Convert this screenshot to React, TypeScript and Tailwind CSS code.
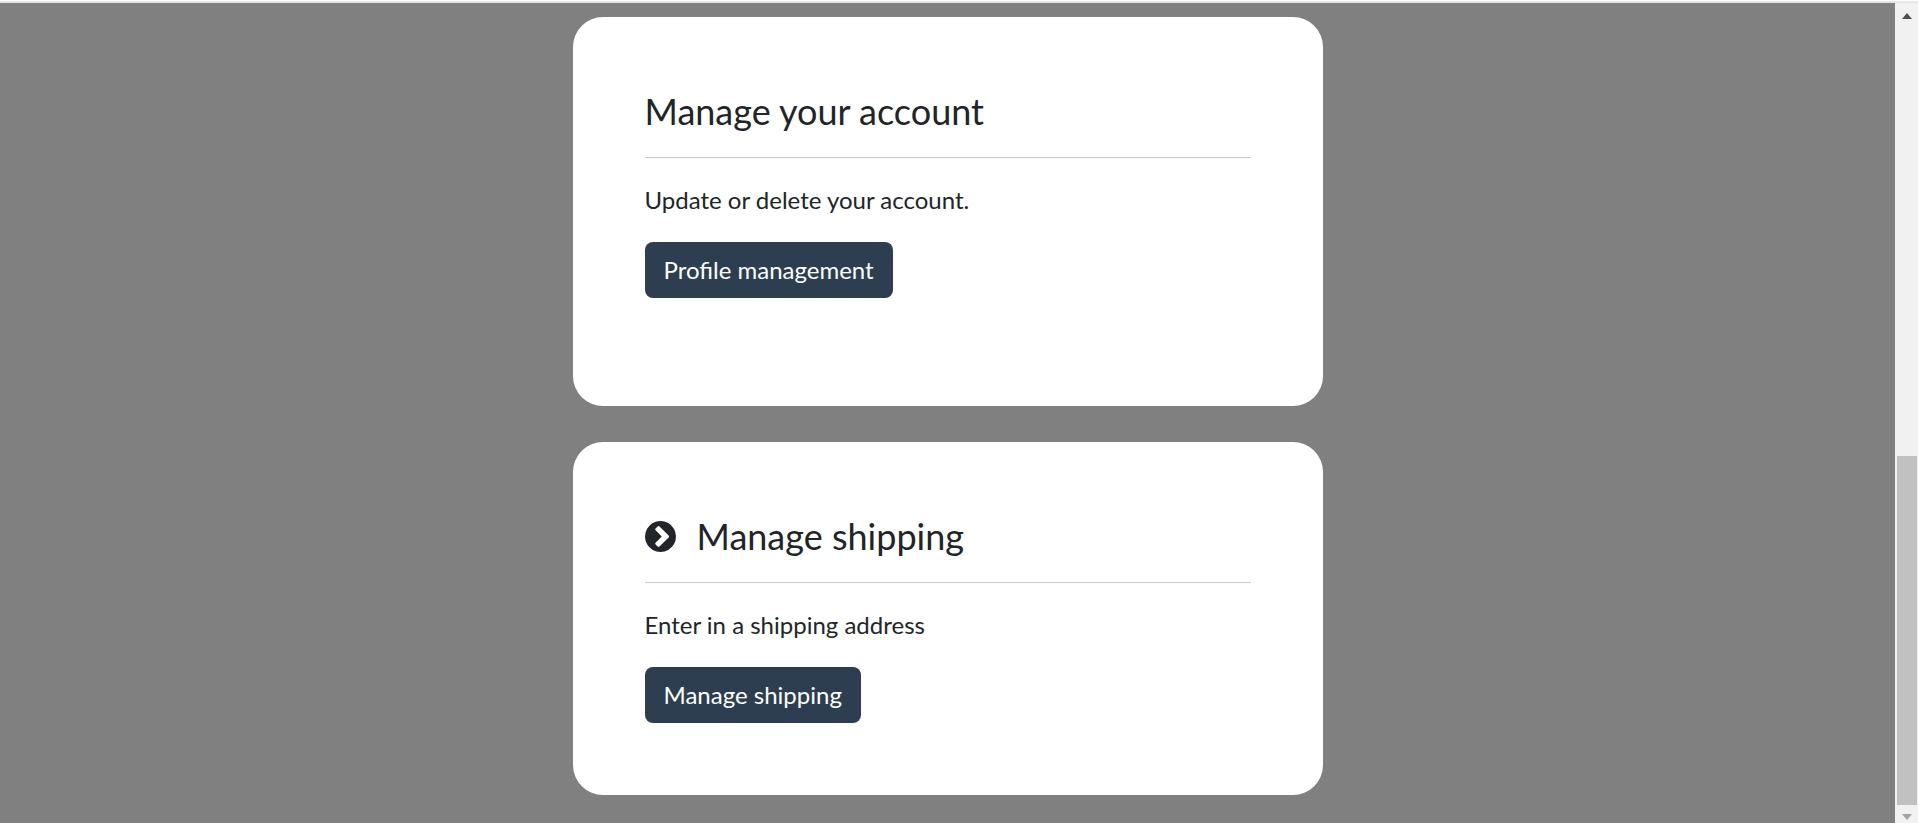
import type { ReactNode } from 'react';

function ChevronCircle() {
  return (
    <svg aria-hidden="true" viewBox="128 128 1536 1536" fill="currentColor" className="mr-[21px] size-[31px] shrink-0">
      <path d="M845 1395l454-454q19-19 19-45t-19-45l-454-454q-19-19-45-19t-45 19l-102 102q-19 19-19 45t19 45l307 307-307 307q-19 19-19 45t19 45l102 102q19 19 45 19t45-19zm819-499q0 209-103 385.5t-279.5 279.5-385.5 103-385.5-103-279.5-279.5-103-385.5 103-385.5 279.5-279.5 385.5-103 385.5 103 279.5 279.5 103 385.5z" />
    </svg>
  );
}

type CardProps = { title: string; text: string; action: string; icon?: ReactNode; extra?: boolean };

function Card({ title, text, action, icon, extra }: CardProps) {
  return (
    <section className={`rounded-[30px] bg-white px-18 pt-18 ${extra ? 'pb-27' : 'pb-18'}`}>
      <h2 className="flex items-center text-4xl leading-11">
        {icon}
        {title}
      </h2>
      <hr className="my-6 border-[#c8c9ca]" />
      <p className="mb-6 text-2xl leading-9">{text}</p>
      <button type="button" className="h-14 rounded-lg bg-[#2c3e50] px-[19px] text-2xl leading-9 text-white">
        {action}
      </button>
    </section>
  );
}

function Scrollbar() {
  return (
    <div aria-hidden="true" className="flex w-[23px] shrink-0 flex-col bg-[#f1f1f1] pr-px pl-0.5">
      <div className="flex h-[26px] items-center justify-center">
        <svg viewBox="0 0 10 6" className="h-1.5 w-2.5 fill-[#505050]"><path d="M5 0l5 6H0z" /></svg>
      </div>
      <div className="grow-[427]" />
      <div className="grow-[349] bg-[#c1c1c1]" />
      <div className="flex h-[18px] items-end justify-center pb-[3px]">
        <svg viewBox="0 0 10 6" className="h-1.5 w-2.5 fill-[#a3a3a3]"><path d="M0 0h10L5 6z" /></svg>
      </div>
    </div>
  );
}

export default function App() {
  return (
    <div className="flex min-h-screen flex-col bg-[#808080] font-['Lato',sans-serif] text-[#212529]">
      <div className="h-[3px] border-t border-white bg-[#e4e4e4]" />
      <div className="flex flex-1">
        <main className="flex min-w-0 flex-1 flex-col items-center px-4 pt-3.5 pb-7">
          <div className="flex w-full max-w-[750px] flex-col gap-9">
            <Card title="Manage your account" text="Update or delete your account." action="Profile management" extra />
            <Card title="Manage shipping" text="Enter in a shipping address" action="Manage shipping" icon={<ChevronCircle />} />
          </div>
        </main>
        <Scrollbar />
      </div>
    </div>
  );
}
